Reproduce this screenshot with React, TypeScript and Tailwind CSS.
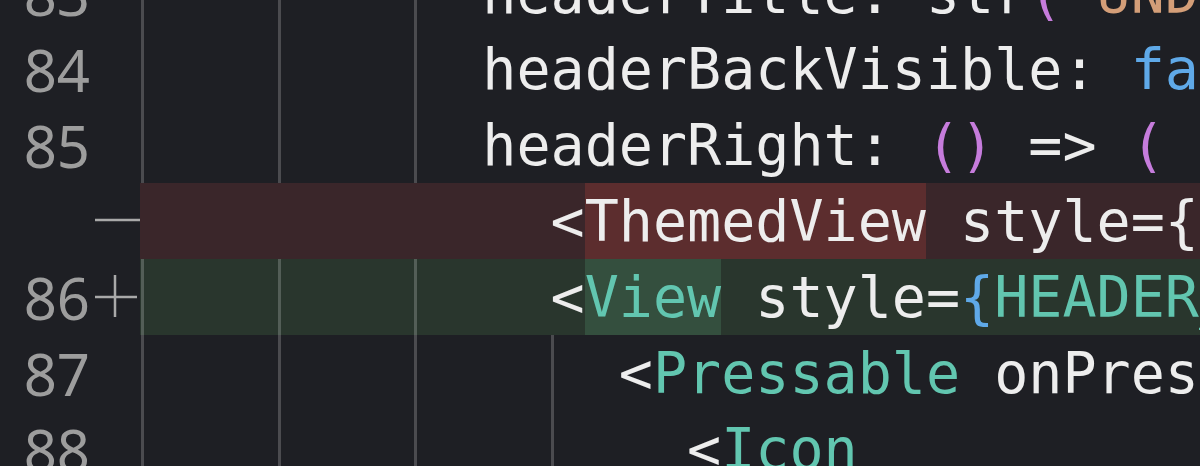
import React from "react";

type Tone = "w" | "p" | "b" | "t" | "o";

interface Token {
  text: string;
  tone: Tone;
  mark?: boolean;
}

interface Line {
  num?: string;
  kind: "ctx" | "del" | "add";
  guides: number[]; // widths in ch, each starts with a guide line
  pad?: number;
  tokens: Token[];
}

const toneClass: Record<Tone, string> = {
  w: "text-[#ededed]",
  p: "text-[#c67cdc]",
  b: "text-[#5fa9e8]",
  t: "text-[#62c6b0]",
  o: "text-[#d49e78]",
};

const widthClass: Record<number, string> = {
  2: "w-[2ch]",
  4: "w-[4ch]",
  12: "w-[12ch]",
};

const lines: Line[] = [
  {
    num: "83",
    kind: "ctx",
    guides: [4, 4, 2],
    tokens: [
      { text: "headerTitle: str", tone: "w" },
      { text: "(", tone: "p" },
      { text: "'UNDO_TITLE'", tone: "o" },
      { text: ")", tone: "p" },
      { text: ",", tone: "w" },
    ],
  },
  {
    num: "84",
    kind: "ctx",
    guides: [4, 4, 2],
    tokens: [
      { text: "headerBackVisible: ", tone: "w" },
      { text: "false", tone: "b" },
      { text: ",", tone: "w" },
    ],
  },
  {
    num: "85",
    kind: "ctx",
    guides: [4, 4, 2],
    tokens: [
      { text: "headerRight: ", tone: "w" },
      { text: "()", tone: "p" },
      { text: " => ", tone: "w" },
      { text: "(", tone: "p" },
    ],
  },
  {
    kind: "del",
    guides: [],
    pad: 12,
    tokens: [
      { text: "<", tone: "w" },
      { text: "ThemedView", tone: "w", mark: true },
      { text: " style={HEADER_STYLE}>", tone: "w" },
    ],
  },
  {
    num: "86",
    kind: "add",
    guides: [4, 4, 4],
    tokens: [
      { text: "<", tone: "w" },
      { text: "View", tone: "t", mark: true },
      { text: " style=", tone: "w" },
      { text: "{", tone: "b" },
      { text: "HEADER_STYLE", tone: "t" },
      { text: "}", tone: "b" },
      { text: ">", tone: "w" },
    ],
  },
  {
    num: "87",
    kind: "ctx",
    guides: [4, 4, 4, 2],
    tokens: [
      { text: "<", tone: "w" },
      { text: "Pressable", tone: "t" },
      { text: " onPress={onUndo}>", tone: "w" },
    ],
  },
  {
    num: "88",
    kind: "ctx",
    guides: [4, 4, 4, 4],
    tokens: [
      { text: "<", tone: "w" },
      { text: "Icon", tone: "t" },
    ],
  },
];

function Marker({ kind }: { kind: Line["kind"] }) {
  if (kind === "del") {
    return (
      <svg width="47" height="76" viewBox="0 0 47 76" className="block">
        <line x1="2" y1="37" x2="47" y2="37" stroke="#a9a9a9" strokeWidth="2.5" />
      </svg>
    );
  }
  if (kind === "add") {
    return (
      <svg width="47" height="76" viewBox="0 0 47 76" className="block">
        <line x1="2" y1="38" x2="44" y2="38" stroke="#a9a9a9" strokeWidth="2.5" />
        <line x1="22" y1="16" x2="22" y2="58" stroke="#a9a9a9" strokeWidth="2.5" />
      </svg>
    );
  }
  return null;
}

export default function App() {
  return (
    <div className="h-[466px] w-[1200px] overflow-hidden bg-[#1e1f24]">
      <div className="-mt-[45px] flex flex-col">
        {lines.map((line, i) => {
          const rowBg =
            line.kind === "del"
              ? "bg-[#3a262a]"
              : line.kind === "add"
              ? "bg-[#29362d]"
              : "";
          const markBg = line.kind === "del" ? "bg-[#5c2d2e]" : "bg-[#344f3e]";
          return (
            <div key={i} className="flex h-[76px]">
              {/* Gutter */}
              <div className="flex w-[140px] shrink-0">
                <span className="w-[93px] pr-[3px] text-right font-['Noto_Sans',sans-serif] text-[58px] leading-[78px] text-[#9d9d9d]">
                  {line.num}
                </span>
                <span className="w-[47px]">
                  <Marker kind={line.kind} />
                </span>
              </div>

              {/* Code */}
              <div
                className={`flex-1 overflow-hidden whitespace-pre pl-[1px] font-['DejaVu_Sans_Mono',monospace] text-[56.7px] leading-[76px] ${rowBg}`}
              >
                {line.guides.map((w, g) => (
                  <span
                    key={g}
                    className={`inline-block h-[76px] align-top border-l-[3px] border-white/20 ${widthClass[w]}`}
                  />
                ))}
                {line.pad ? (
                  <span className={`inline-block h-[76px] align-top ${widthClass[line.pad]}`} />
                ) : null}
                {line.tokens.map((tk, j) => (
                  <span
                    key={j}
                    className={`inline-block h-[76px] align-top ${toneClass[tk.tone]} ${tk.mark ? markBg : ""}`}
                  >
                    {tk.text}
                  </span>
                ))}
              </div>
            </div>
          );
        })}
      </div>
    </div>
  );
}
